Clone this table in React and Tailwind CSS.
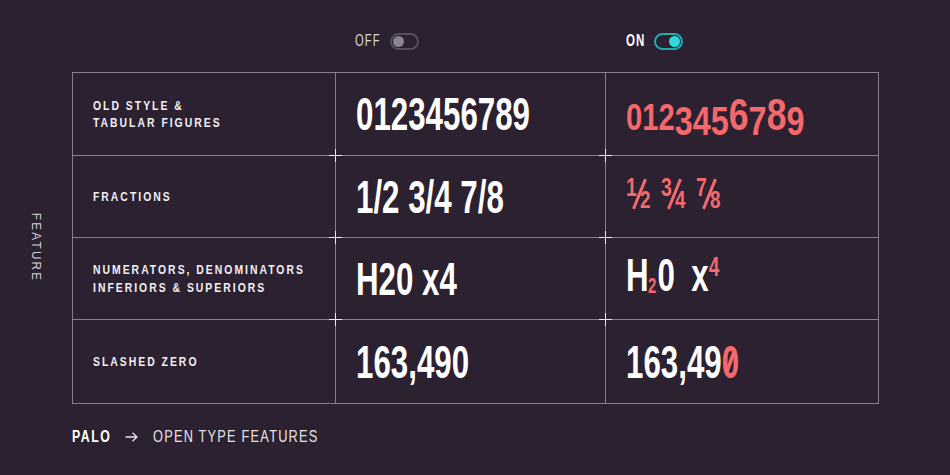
import React from "react";

const FONT = "font-['Liberation_Sans','Arial',sans-serif]";

function Cross({ className }) {
  return (
    <div className={`absolute w-[13px] h-[13px] ${className}`}>
      <div className="absolute left-0 top-[6px] w-[13px] h-px bg-[#ece9ef]" />
      <div className="absolute top-0 left-[6px] h-[13px] w-px bg-[#ece9ef]" />
    </div>
  );
}

function Toggle({ on }) {
  return (
    <div
      className={`w-[29px] h-[17px] rounded-full border-2 flex items-center px-[1px] ${
        on ? "border-[#23a9b0] justify-end" : "border-[#574f5d] justify-start"
      }`}
    >
      <div className={`w-[11px] h-[11px] rounded-full ${on ? "bg-[#33d6dc]" : "bg-[#8a8490]"}`} />
    </div>
  );
}

function Label({ children }) {
  return (
    <div className="text-[13px] leading-[17.5px] font-bold tracking-[2.5px] text-[#f4f1f5] uppercase whitespace-nowrap scale-x-[0.8] origin-left">
      {children}
    </div>
  );
}

function Big({ children }) {
  return (
    <div className="text-[46px] leading-none font-bold text-white scale-x-[0.68] origin-left whitespace-nowrap">
      {children}
    </div>
  );
}

function Fraction({ n, d }) {
  return (
    <div className="relative w-[26px] h-[30px] text-[#f5686b] font-bold leading-none">
      <span className="absolute left-[-1px] top-[-4px] text-[25px] scale-x-[0.78] origin-left">{n}</span>
      <span className="absolute left-[11px] top-[-1px] w-[3px] h-[32px] bg-[#f5686b] rotate-[22deg]" />
      <span className="absolute left-[13px] top-[10px] text-[23px] scale-x-[0.82] origin-left">{d}</span>
    </div>
  );
}

export default function App() {
  const cell = "bg-[#2b2130] flex items-center pl-5";
  return (
    <div className={`w-[950px] h-[475px] bg-[#2b2130] overflow-hidden ${FONT}`}>
      {/* header */}
      <div className="h-[72px] pt-[10px] ml-[72px] grid grid-cols-[263px_270px_273px] items-center">
        <div />
        <div className="flex items-center gap-[10px] pl-[20px]">
          <span className="block w-[25px]">
            <span className="block text-[16px] leading-none tracking-[1.6px] text-[#d9d5dc] scale-x-[0.7] origin-left whitespace-nowrap">
              OFF
            </span>
          </span>
          <Toggle on={false} />
        </div>
        <div className="flex items-center gap-[9px] pl-[21px]">
          <span className="block w-[19px]">
            <span className="block text-[16px] leading-none font-bold tracking-[1.6px] text-white scale-x-[0.72] origin-left whitespace-nowrap">
              ON
            </span>
          </span>
          <Toggle on />
        </div>
      </div>

      {/* body */}
      <div className="flex">
        <div className="w-[72px] flex items-center justify-center pt-[20px]">
          <span className="block [writing-mode:vertical-rl] text-[13px] leading-none tracking-[2.5px] text-[#d3cfd6] scale-y-[0.9]">
            FEATURE
          </span>
        </div>
        <div className="relative">
          <div className="grid grid-cols-[262px_269px_272px] grid-rows-[82px_81px_81px_83px] gap-px p-px bg-[#857f8b]">
            {/* row 1 */}
            <div className={cell}>
              <div>
                <Label>Old style &amp;</Label>
                <Label>Tabular figures</Label>
              </div>
            </div>
            <div className={cell}>
              <Big>0123456789</Big>
            </div>
            <div className={cell}>
              <div className="flex items-baseline scale-x-[0.79] origin-left font-bold text-[#f5686b] leading-none">
                <span className="text-[37px]">0</span>
                <span className="text-[37px]">1</span>
                <span className="text-[37px]">2</span>
                <span className="text-[41px] relative top-[5px]">3</span>
                <span className="text-[41px] relative top-[5px]">4</span>
                <span className="text-[41px] relative top-[5px]">5</span>
                <span className="text-[45px]">6</span>
                <span className="text-[41px] relative top-[5px]">7</span>
                <span className="text-[45px]">8</span>
                <span className="text-[41px] relative top-[5px]">9</span>
              </div>
            </div>

            {/* row 2 */}
            <div className={cell}>
              <Label>Fractions</Label>
            </div>
            <div className={cell}>
              <Big>1/2 3/4 7/8</Big>
            </div>
            <div className={`${cell} pl-[21px]`}>
              <div className="flex gap-[9px] mb-[6px]">
                <Fraction n="1" d="2" />
                <Fraction n="3" d="4" />
                <Fraction n="7" d="8" />
              </div>
            </div>

            {/* row 3 */}
            <div className={cell}>
              <div>
                <Label>Numerators, denominators</Label>
                <Label>Inferiors &amp; superiors</Label>
              </div>
            </div>
            <div className={cell}>
              <Big>H20 x4</Big>
            </div>
            <div className={cell}>
              <div className="flex items-baseline scale-x-[0.68] origin-left font-bold text-white text-[46px] leading-none mb-[8px] whitespace-nowrap">
                <span>H</span>
                <span className="text-[22px] text-[#f5686b] relative top-[2px] -ml-[1px] mr-[2px]">2</span>
                <span>0</span>
                <span className="ml-[24px]">x</span>
                <span className="text-[28px] text-[#f5686b] relative -top-[15px]">4</span>
              </div>
            </div>

            {/* row 4 */}
            <div className={cell}>
              <Label>Slashed zero</Label>
            </div>
            <div className={cell}>
              <Big>163,490</Big>
            </div>
            <div className={cell}>
              <div className="flex items-baseline scale-x-[0.68] origin-left font-bold text-white text-[46px] leading-none whitespace-nowrap">
                <span>163,49</span>
                <span className="relative text-[#f5686b]">
                  0
                  <span className="absolute left-[10px] top-[10px] w-[5px] h-[26px] bg-[#f5686b] rotate-[28deg]" />
                </span>
              </div>
            </div>
          </div>

          <Cross className="left-[257px] top-[77px]" />
          <Cross className="left-[527px] top-[77px]" />
          <Cross className="left-[257px] top-[159px]" />
          <Cross className="left-[527px] top-[159px]" />
          <Cross className="left-[257px] top-[241px]" />
          <Cross className="left-[527px] top-[241px]" />
        </div>
      </div>

      {/* footer */}
      <div className="h-[66px] pl-[72px] flex items-center leading-none">
        <span className="block w-[39px]">
          <span className="block text-[16px] font-bold tracking-[2px] text-white scale-x-[0.77] origin-left whitespace-nowrap">
            PALO
          </span>
        </span>
        <svg className="ml-[14px]" width="13" height="10" viewBox="0 0 13 10" fill="none">
          <path d="M0.5 5H12M7.5 0.8L12 5L7.5 9.2" stroke="#e6e3e8" strokeWidth="1.3" />
        </svg>
        <span className="block w-[166px] ml-[15px]">
          <span className="block text-[16px] tracking-[1.5px] text-[#e6e3e8] scale-x-[0.8] origin-left whitespace-nowrap">
            OPEN TYPE FEATURES
          </span>
        </span>
      </div>
    </div>
  );
}
